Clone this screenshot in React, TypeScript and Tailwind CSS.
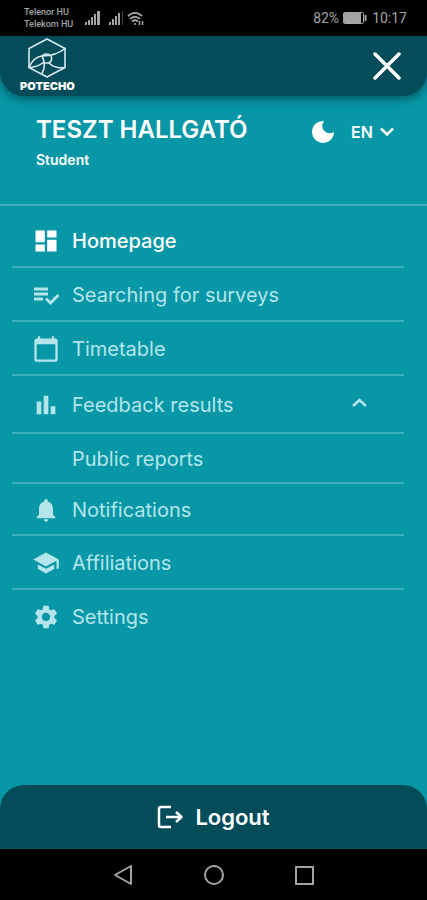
import type { ReactNode } from 'react';
import {
  MdBarChart,
  MdCalendarToday,
  MdDashboard,
  MdNotifications,
  MdSchool,
  MdSettings,
} from 'react-icons/md';

function SignalIcon() {
  return (
    <svg width="16" height="14" viewBox="0 0 16 14" fill="currentColor" aria-hidden="true">
      <rect x="0" y="11" width="2" height="3" />
      <rect x="3" y="9" width="2" height="5" />
      <rect x="6" y="6" width="2" height="8" />
      <rect x="9" y="3" width="2" height="11" />
      <rect x="12" y="0" width="3" height="14" />
    </svg>
  );
}

function StatusBar() {
  return (
    <div className="flex h-9 items-center bg-black pr-5 pl-6 font-['Roboto',sans-serif] text-[#a3a3a3]">
      <div className="text-[9px] leading-3 font-medium">
        <div>Telenor HU</div>
        <div>Telekom HU</div>
      </div>
      <div className="ml-3 flex items-center gap-2">
        <SignalIcon />
        <div className="flex items-center gap-1">
          <svg width="14" height="14" viewBox="0 0 14 14" fill="currentColor" aria-hidden="true">
            <rect x="0" y="11" width="2" height="3" />
            <rect x="3" y="8" width="2" height="6" />
            <rect x="6" y="5" width="2" height="9" />
            <rect x="9" y="2" width="2" height="12" />
            <rect x="13" y="0" width="1" height="14" opacity="0.4" />
          </svg>
          <svg width="17" height="15" viewBox="0 0 17 15" fill="none" stroke="currentColor" strokeWidth="1.800" aria-hidden="true">
            <path d="M1 5Q8-1.500 15 5M3 8Q8 3.500 13 8M5 10.500Q8 8 11 10.500" />
            <circle cx="8" cy="13" r="1" fill="currentColor" stroke="none" />
            <path d="M12.500 10v4M15.500 10v4" strokeWidth="1.500" />
          </svg>
        </div>
      </div>
      <div className="ml-auto flex items-center gap-1 text-sm">
        <span>82%</span>
        <svg width="25" height="12" viewBox="0 0 25 12" fill="none" stroke="currentColor" aria-hidden="true">
          <rect x="0.500" y="0.500" width="20" height="11" rx="1" />
          <rect x="1" y="1" width="17" height="10" fill="currentColor" stroke="none" />
          <path d="M22.500 3v6" strokeWidth="2" />
        </svg>
        <span>10:17</span>
      </div>
    </div>
  );
}

function Header() {
  return (
    <header className="flex h-15 items-center justify-between rounded-b-3xl bg-[#034c59] pr-6 pl-5 shadow-[0_3px_10px_rgba(0,40,50,0.55)]">
      <a href="#home" className="flex flex-col items-center text-white">
        <svg width="40" height="40" viewBox="0 0 40 40" fill="none" stroke="currentColor" strokeWidth="1.600" strokeLinejoin="round" strokeLinecap="round" className="text-[#d8e8ee]" aria-hidden="true">
          <path d="M20 1 38 10.500V29.500L20 39 2 29.500V10.500Z" />
          <path d="M2 29Q7 19 15 18Q29 18 38 10.500" />
          <path d="M15 18Q19 14 24 18Q26 22 22 25L17 25" />
          <path d="M15 18Q18 24 17 30L15 36" />
          <path d="M22 25Q28 31 38 29.500" />
          <path d="M2 29.500Q11 29 17 24" />
        </svg>
        <span className="text-[11px] leading-4 font-black font-['Inter',sans-serif]">POTECHO</span>
      </a>
      <button type="button" aria-label="Close menu" className="text-white">
        <svg width="30" height="30" viewBox="0 0 30 30" fill="none" stroke="currentColor" strokeWidth="3.500" strokeLinecap="round" aria-hidden="true">
          <path d="M2 3 26 27M26 3 2 27" />
        </svg>
      </button>
    </header>
  );
}

function Profile() {
  return (
    <section className="flex h-[110px] items-start justify-between border-b-2 border-[#3aafba] pt-5 pr-8 pl-9 text-white">
      <div>
        <h1 className="text-2xl leading-7 font-semibold">TESZT HALLGATÓ</h1>
        <p className="mt-1 text-sm leading-6 font-semibold">Student</p>
      </div>
      <div className="flex h-8 items-center gap-4">
        <button type="button" aria-label="Dark mode">
          <svg width="24" height="24" viewBox="0 0 24 24" fill="currentColor" aria-hidden="true">
            <path d="M13 1A11 11 0 1 0 23 12A7.500 7.500 0 0 1 13 1Z" />
          </svg>
        </button>
        <div className="grid items-center">
          <select
            aria-label="Language"
            defaultValue="EN"
            className="col-start-1 row-start-1 w-11 appearance-none bg-transparent text-base leading-5 font-semibold"
          >
            <option value="EN">EN</option>
            <option value="HU">HU</option>
          </select>
          <svg width="16" height="10" viewBox="0 0 16 10" fill="none" stroke="currentColor" strokeWidth="2.500" className="pointer-events-none col-start-1 row-start-1 justify-self-end" aria-hidden="true">
            <path d="M2 1.500 8 7.500 14 1.500" />
          </svg>
        </div>
      </div>
    </section>
  );
}

function SurveySearchIcon() {
  return (
    <svg width="28" height="28" viewBox="0 0 28 28" fill="none" stroke="currentColor" strokeWidth="2.800" aria-hidden="true">
      <path d="M2 8H16M2 13H16M2 18H11" />
      <path d="M14 17.500 18.500 22 26.500 14" />
    </svg>
  );
}

type RowProps = {
  label: string;
  icon?: ReactNode;
  height?: string;
  active?: boolean;
  last?: boolean;
  trailing?: ReactNode;
};

function Row({ label, icon, height = 'h-[54px]', active, last, trailing }: RowProps) {
  return (
    <li className={last ? '' : 'border-b-2 border-[#3aafba]'}>
      <a
        href={'#' + label.toLowerCase().replace(/ /g, '-')}
        aria-current={active ? 'page' : undefined}
        className={`-mb-0.5 flex items-center gap-3 pr-9 pl-5 text-xl ${height} ${active ? 'font-medium text-white' : 'text-[#b3e5ea]'}`}
      >
        <span className="w-7 shrink-0 text-[28px]">{icon}</span>
        <span>{label}</span>
        {trailing && <span className="ml-auto">{trailing}</span>}
      </a>
    </li>
  );
}

function Menu() {
  return (
    <nav className="grow pt-2 pr-[23px] pl-3">
      <ul>
        <Row label="Homepage" icon={<MdDashboard />} active />
        <Row label="Searching for surveys" icon={<SurveySearchIcon />} />
        <Row label="Timetable" icon={<MdCalendarToday />} />
        <Row
          label="Feedback results"
          icon={<MdBarChart />}
          height="h-[58px]"
          trailing={
            <svg width="16" height="14" viewBox="0 0 16 14" fill="none" stroke="currentColor" strokeWidth="2.500" aria-hidden="true">
              <path d="M1 8 7.500 2 14 8" />
            </svg>
          }
        />
        <Row label="Public reports" height="h-[50px]" />
        <Row label="Notifications" icon={<MdNotifications />} height="h-[52px]" />
        <Row label="Affiliations" icon={<MdSchool />} />
        <Row label="Settings" icon={<MdSettings />} last />
      </ul>
    </nav>
  );
}

function SystemNav() {
  return (
    <div className="flex h-[51px] items-center justify-center gap-[70px] bg-black text-[#a3a3a3]">
      <button type="button" aria-label="Back">
        <svg width="20" height="20" viewBox="0 0 20 20" fill="none" stroke="currentColor" strokeWidth="2" strokeLinejoin="round" aria-hidden="true">
          <path d="M17 1V19L1 10Z" />
        </svg>
      </button>
      <button type="button" aria-label="Home">
        <svg width="20" height="20" viewBox="0 0 20 20" fill="none" stroke="currentColor" strokeWidth="2" aria-hidden="true">
          <circle cx="10" cy="10" r="9" />
        </svg>
      </button>
      <button type="button" aria-label="Recent apps">
        <svg width="20" height="20" viewBox="0 0 20 20" fill="none" stroke="currentColor" strokeWidth="2" aria-hidden="true">
          <rect x="2" y="2" width="17" height="17" />
        </svg>
      </button>
    </div>
  );
}

export default function App() {
  return (
    <div className="flex min-h-screen flex-col bg-[#0897a6] font-['Inter',sans-serif]">
      <StatusBar />
      <Header />
      <Profile />
      <Menu />
      <button type="button" className="flex h-16 items-center justify-center gap-2 rounded-t-3xl bg-[#034c59] text-[22px] font-semibold text-white">
        <svg width="30" height="24" viewBox="0 0 30 24" fill="none" stroke="currentColor" strokeWidth="2.500" strokeLinejoin="round" aria-hidden="true">
          <path d="M14 2H4Q2 2 2 4V20Q2 22 4 22H14" />
          <path d="M9 12H24M19 7 24.500 12 19 17" />
        </svg>
        Logout
      </button>
      <SystemNav />
    </div>
  );
}
